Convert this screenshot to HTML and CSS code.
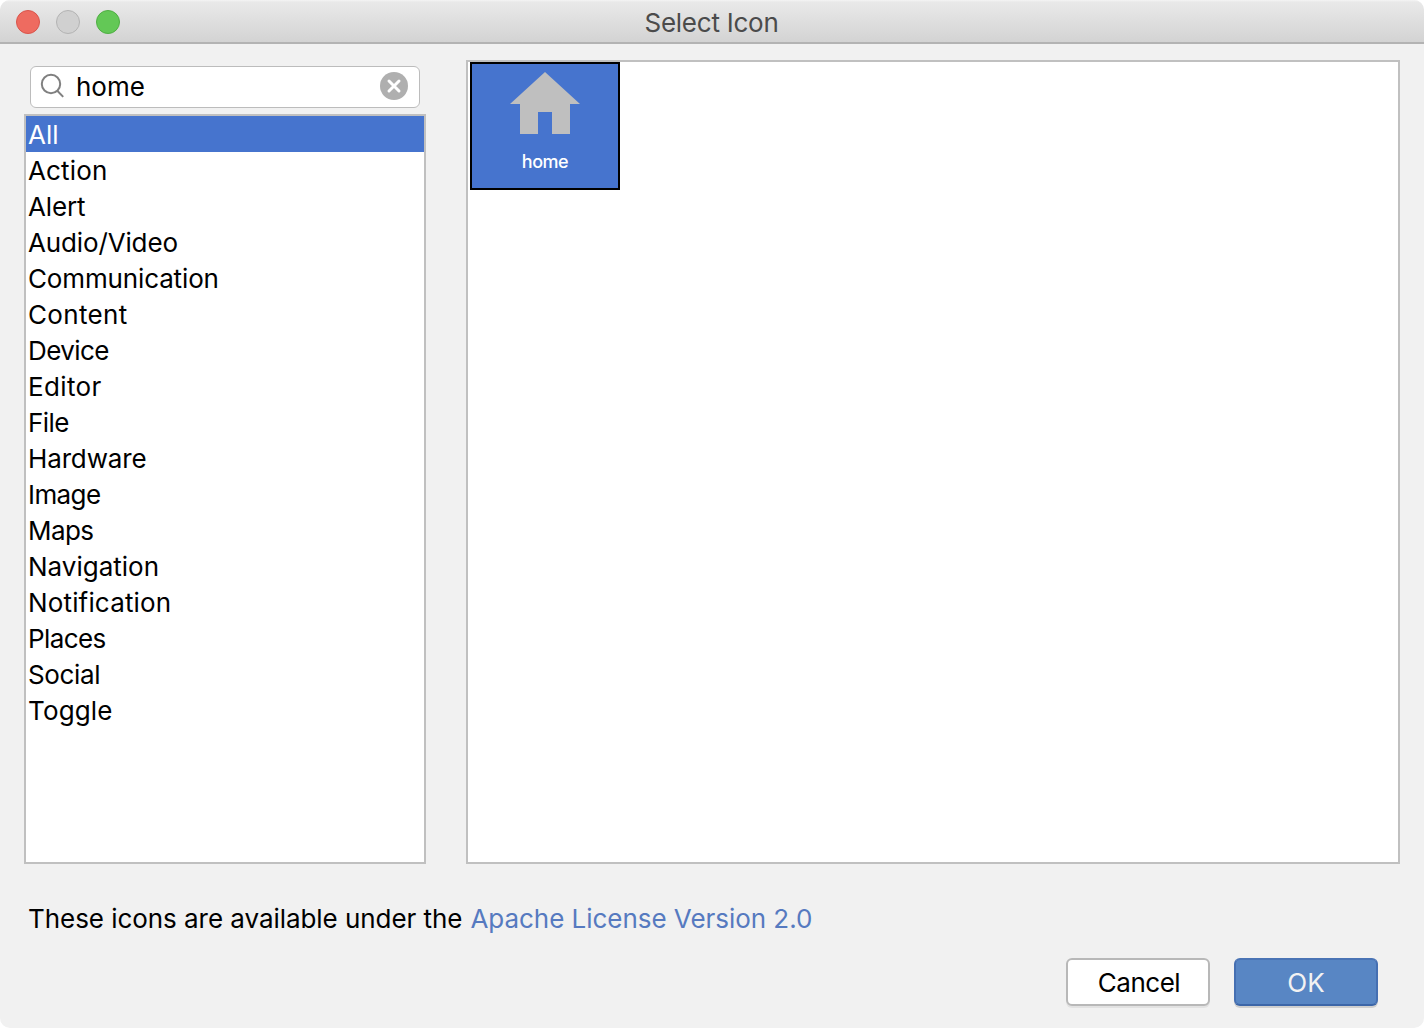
FILE: index.html
```html
<!DOCTYPE html>
<html lang="en">
<head>
<meta charset="utf-8">
<title>Select Icon</title>
<link rel="stylesheet" href="styles.css">
</head>
<body>
<div class="dialog">
  <header class="titlebar">
    <div class="lights"><span class="light close"></span><span class="light minimize"></span><span class="light maximize"></span></div>
    <h1 class="title">Select Icon</h1>
  </header>
  <main class="content">
    <section class="sidebar">
      <div class="search">
        <svg class="search-icon" width="25" height="26" viewBox="0 0 25 26"><circle cx="11" cy="11" r="9.2"/><path d="M17.3 17.8 23.2 23.9"/></svg>
        <span class="query">home</span>
        <svg class="clear-icon" width="28" height="28" viewBox="0 0 28 28"><circle cx="14" cy="14" r="14"/><path d="M9 9 19 19M19 9 9 19"/></svg>
      </div>
      <ul class="categories">
        <li class="selected"><span>All</span></li>
        <li class="open"><span>Action</span></li>
        <li class="snug"><span>Alert</span></li>
        <li class="snug"><span>Audio/Video</span></li>
        <li class="snug"><span>Communication</span></li>
        <li class="wide"><span>Content</span></li>
        <li class="tight"><span>Device</span></li>
        <li class="wide"><span>Editor</span></li>
        <li class="tight"><span>File</span></li>
        <li class="snug"><span>Hardware</span></li>
        <li class="tight"><span>Image</span></li>
        <li class="tight"><span>Maps</span></li>
        <li><span>Navigation</span></li>
        <li class="open"><span>Notification</span></li>
        <li class="tight"><span>Places</span></li>
        <li class="close-set"><span>Social</span></li>
        <li class="open"><span>Toggle</span></li>
      </ul>
    </section>
    <section class="icons">
      <div class="icon-cell">
        <svg width="70" height="62" viewBox="0 0 70 62" fill="#bfbfbf"><path d="M35 0 70 32H60V62H42V40H28V62H10V32H0Z"/></svg>
        <span class="icon-name">home</span>
      </div>
    </section>
  </main>
  <p class="license"><span class="notice">These icons are available under the</span><a class="link">Apache License Version 2.0</a></p>
  <footer class="buttons">
    <button class="button cancel"><span>Cancel</span></button>
    <button class="button ok"><span>OK</span></button>
  </footer>
</div>
</body>
</html>
```
FILE: styles.css
```css
* { box-sizing: border-box; }
body {
  margin: 0;
  background: #fff;
  color: #000;
  font: 26px/36px Inter, "Liberation Sans", sans-serif;
}
.dialog {
  display: flex;
  flex-direction: column;
  width: 1424px;
  height: 1028px;
  overflow: hidden;
  border-radius: 10px;
  background: #f1f1f1;
}
.titlebar {
  display: grid;
  grid-template-columns: 1fr auto 1fr;
  align-items: center;
  height: 44px;
  padding: 0 16px;
  background: linear-gradient(#f4f4f4 0, #e9e9e9 2px, #d3d3d3 42px);
  border-bottom: 2px solid #b3b3b3;
}
.lights { display: flex; gap: 16px; padding-top: 2px; }
.light { width: 24px; height: 24px; border-radius: 50%; border: 1px solid; }
.close { background: #ee6b60; border-color: #d9544b; }
.minimize { background: #d0d0d0; border-color: #b3b3b3; }
.maximize { background: #63c856; border-color: #4fae43; }
.title { margin: 4px 1px 0 0; font-size: 26px; font-weight: 400; letter-spacing: -0.25px; color: #4b4b4b; }
.content { display: flex; gap: 40px; height: 820px; padding: 16px 24px 0; }
.sidebar { display: flex; flex-direction: column; gap: 6px; width: 402px; padding-top: 6px; }
.search {
  display: flex;
  align-items: center;
  height: 42px;
  margin: 0 6px;
  padding: 0 11px 2px 9px;
  border: 1px solid #bcbcbc;
  border-radius: 6px;
  background: #fff;
}
.search-icon { fill: none; stroke: #808080; stroke-width: 2; }
.query { flex: 1; padding: 2px 0 0 11px; }
.clear-icon { fill: #afafaf; }
.clear-icon path { stroke: #fff; stroke-width: 3; stroke-linecap: round; }
.categories { flex: 1; margin: 0; padding: 0; list-style: none; border: 2px solid #c0c0c0; background: #fff; }
.categories li { height: 36px; padding: 1px 0 0 2px; }
.categories .selected { background: #4674ce; color: #fff; }
.tight { letter-spacing: -0.6px; }
.close-set { letter-spacing: -0.35px; }
.snug { letter-spacing: -0.14px; }
.open { letter-spacing: 0.16px; }
.wide { letter-spacing: 0.35px; }
.icons { flex: 1; padding: 0 2px; border: 2px solid #c0c0c0; background: #fff; }
.icon-cell {
  display: flex;
  flex-direction: column;
  align-items: center;
  width: 150px;
  height: 128px;
  padding-top: 8px;
  border: 2px solid #000;
  background: #4674ce;
  color: #fff;
}
.icon-name { margin-top: 16px; font-size: 18px; font-weight: 500; line-height: 24px; letter-spacing: -0.5px; }
.license { display: flex; gap: 8px; margin: 0; padding: 37px 28px 0; }
.notice { letter-spacing: -0.05px; }
.link { color: #567ac0; letter-spacing: -0.04px; }
.buttons { display: flex; justify-content: flex-end; gap: 24px; padding: 21px 46px 0; }
.button {
  width: 144px;
  height: 48px;
  padding: 2px 0 0;
  border: 2px solid #b8b8b8;
  border-radius: 6px;
  background: #fff;
  box-shadow: 0 2px 0 #e2e2e2;
  color: #000;
  font: inherit;
}
.cancel { padding-left: 2px; letter-spacing: -0.5px; }
.ok { background: #5886c4; border-color: #4a74b5 #456fb2 #3c66a8; box-shadow: 0 2px 0 #cfcfcf; color: #f2f2f2; }
```
